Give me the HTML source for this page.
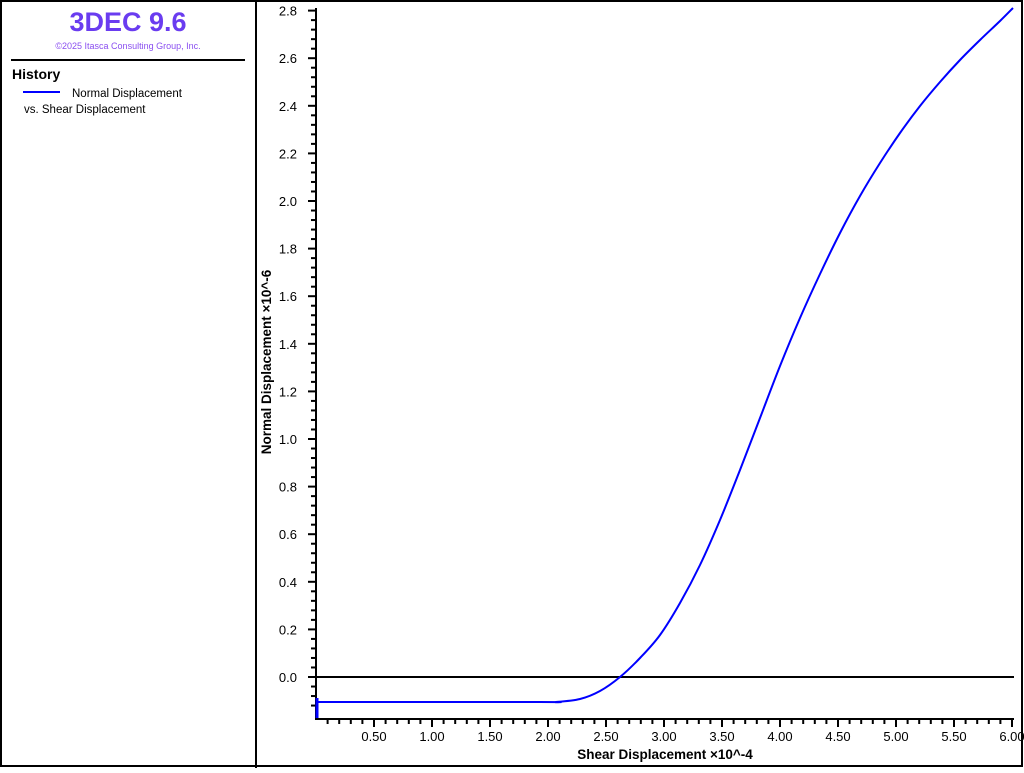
<!DOCTYPE html>
<html><head><meta charset="utf-8"><style>
html,body{margin:0;padding:0;background:#fff;}
body{width:1024px;height:768px;overflow:hidden;font-family:"Liberation Sans",sans-serif;}
</style></head><body>
<svg width="1024" height="768" viewBox="0 0 1024 768" xmlns="http://www.w3.org/2000/svg" font-family="Liberation Sans, sans-serif">
<rect x="1" y="1" width="1021" height="765" fill="none" stroke="#000" stroke-width="2"/>
<line x1="256" y1="0" x2="256" y2="768" stroke="#000" stroke-width="2"/>
<text x="128" y="31" text-anchor="middle" font-size="27" font-weight="bold" fill="#6a3cf0">3DEC 9.6</text>
<text x="128" y="49" text-anchor="middle" font-size="9" fill="#8a4ff0">©2025 Itasca Consulting Group, Inc.</text>
<line x1="11" y1="60" x2="245" y2="60" stroke="#000" stroke-width="2"/>
<text x="12" y="79" font-size="14" font-weight="bold">History</text>
<line x1="23" y1="92" x2="60" y2="92" stroke="#0000ff" stroke-width="2"/>
<text x="72" y="97" font-size="11.5">Normal Displacement</text>
<text x="24" y="113" font-size="11.5">vs. Shear Displacement</text>
<g stroke="#000" stroke-width="2">
<line x1="316" y1="8" x2="316" y2="720"/>
<line x1="315" y1="719" x2="1014" y2="719"/>
<line x1="316" y1="677" x2="1014" y2="677"/>
</g>
<g id="yt" stroke="#000" stroke-width="2"></g>
<g id="xt" stroke="#000" stroke-width="2"></g>
<g id="yl" font-size="13" text-anchor="end"></g>
<g id="xl" font-size="13" text-anchor="middle"></g>
<path id="curve" d="" fill="none" stroke="#0000ff" stroke-width="2" stroke-linejoin="round"/>
<line x1="317" y1="698" x2="317" y2="718" stroke="#0000ff" stroke-width="3"/>
<text transform="translate(271,362) rotate(-90)" text-anchor="middle" font-size="13.5" font-weight="bold">Normal Displacement  ×10^-6</text>
<text x="665" y="759" text-anchor="middle" font-size="13.5" font-weight="bold">Shear Displacement  ×10^-4</text>
</svg>
<script>
var ns="http://www.w3.org/2000/svg";
function el(p,t,a,txt){var e=document.createElementNS(ns,t);for(var k in a)e.setAttribute(k,a[k]);if(txt)e.textContent=txt;document.getElementById(p).appendChild(e);}
var y0=677,dy=47.6;
for(var i=-3;i<=70;i++){var y=y0-i*dy/5;if(y>718||y<8)continue;var maj=(i%5==0);el("yt","line",{x1:maj?308:311,y1:y,x2:316,y2:y});}
for(var i=0;i<=14;i++){var y=y0-i*dy;el("yl","text",{x:297,y:y+5},(i*0.2).toFixed(1));}
var x0=316,dx=11.6;
for(var i=1;i<=60;i++){var x=x0+i*dx;var maj=(i%5==0);el("xt","line",{x1:x,y1:719,x2:x,y2:maj?727:724});}
for(var i=1;i<=12;i++){el("xl","text",{x:x0+i*dx*5,y:741},(i*0.5).toFixed(2));}
var P=[[316,702],[540,702],[556,702],[580,699],[600,691],[620,677],[640,658],[660,635],[680,603],[700,565],[720,520],[740,470],[760,418],[780,366],[800,318],[820,274],[840,233],[860,196],[880,163],[900,133],[920,106],[940,82],[960,60],[980,40],[1000,21],[1013,8]];
var d="M"+P[0][0]+","+P[0][1];
for(var i=0;i<P.length-1;i++){var p0=P[i>0?i-1:i],p1=P[i],p2=P[i+1],p3=P[i+2<P.length?i+2:i+1];
var c1x=p1[0]+(p2[0]-p0[0])/6,c1y=p1[1]+(p2[1]-p0[1])/6,c2x=p2[0]-(p3[0]-p1[0])/6,c2y=p2[1]-(p3[1]-p1[1])/6;
d+=" C"+c1x+","+c1y+" "+c2x+","+c2y+" "+p2[0]+","+p2[1];}
document.getElementById("curve").setAttribute("d",d);
</script>
</body></html>
